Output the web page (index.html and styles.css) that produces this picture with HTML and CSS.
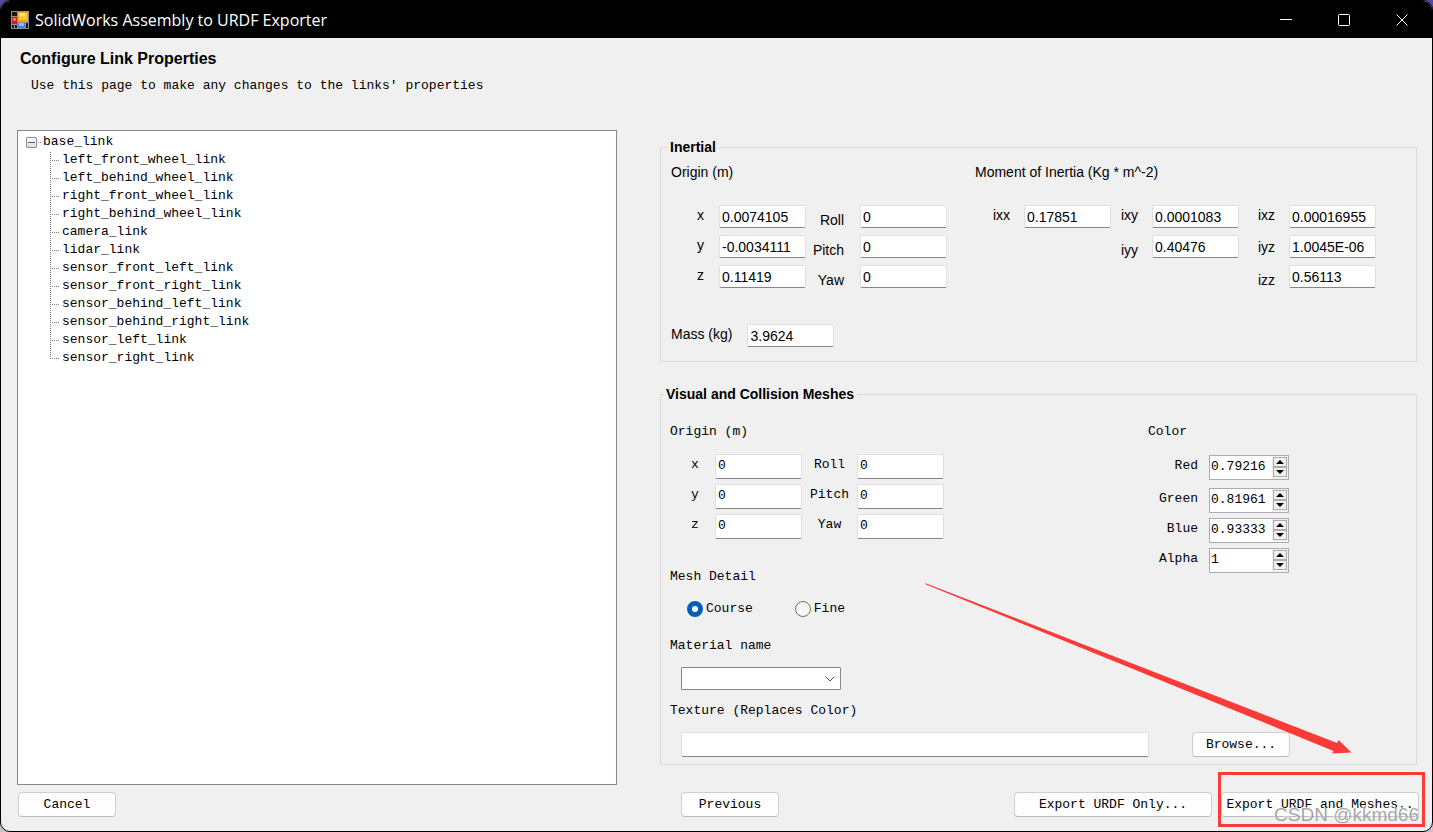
FILE: index.html
```
<!DOCTYPE html>
<html lang="en">
<head>
<meta charset="utf-8">
<title>SolidWorks Assembly to URDF Exporter</title>
<link rel="stylesheet" href="styles.css">
</head>
<body>
<div class="window">
  <header class="titlebar">
    <svg class="app-icon" viewBox="0 0 18 18" aria-hidden="true">
      <rect width="18" height="18" fill="#8f8f8f"/>
      <path d="M1 1h5v4H1zM1 14h2v3H1zM4 14h2v3H4zM15 12h2v5h-2z" fill="#1c1410"/>
      <rect x="1" y="6" width="5" height="7" fill="#b8241c"/>
      <rect x="2" y="7" width="3" height="3" fill="#ea6f62"/>
      <rect x="7" y="1" width="10" height="10" fill="#e9a91c"/>
      <rect x="8" y="2" width="8" height="7" fill="#f8c93c"/>
      <rect x="8" y="2" width="6" height="3" fill="#fde28a"/>
      <rect x="7" y="12" width="7" height="5" fill="#3c7fe0"/>
      <rect x="8" y="12" width="5" height="3" fill="#8dbcf8"/>
    </svg>
    <span class="window-title">SolidWorks Assembly to URDF Exporter</span>
    <div class="window-controls">
      <button type="button" aria-label="Minimize"><svg viewBox="0 0 12 12"><path d="M0 5.5h12"/></svg></button>
      <button type="button" aria-label="Maximize"><svg viewBox="0 0 12 12"><rect x=".5" y=".5" width="11" height="11" rx="1"/></svg></button>
      <button type="button" aria-label="Close"><svg viewBox="0 0 12 12"><path d="M.5.5l11 11M11.5.5l-11 11"/></svg></button>
    </div>
  </header>

  <main class="page">
    <h1>Configure Link Properties</h1>
    <p class="hint">Use this page to make any changes to the links' properties</p>

    <div class="columns">
      <div class="tree">
        <div class="tree-root"><button type="button" class="expander" aria-label="Collapse base_link"></button><span class="stub"></span>base_link</div>
        <ul class="tree-children">
          <li>left_front_wheel_link</li>
          <li>left_behind_wheel_link</li>
          <li>right_front_wheel_link</li>
          <li>right_behind_wheel_link</li>
          <li>camera_link</li>
          <li>lidar_link</li>
          <li>sensor_front_left_link</li>
          <li>sensor_front_right_link</li>
          <li>sensor_behind_left_link</li>
          <li>sensor_behind_right_link</li>
          <li>sensor_left_link</li>
          <li>sensor_right_link</li>
        </ul>
      </div>

      <div class="groups">
        <fieldset class="group inertial">
          <legend>Inertial</legend>
          <div class="inertial-halves">
            <section>
              <h2>Origin (m)</h2>
              <div class="pose">
                <label class="raised" for="ix">x</label><input id="ix" type="text" value="0.0074105">
                <label class="lowered" for="iroll">Roll</label><input id="iroll" type="text" value="0">
                <label class="raised" for="iy">y</label><input id="iy" type="text" value="-0.0034111">
                <label class="lowered" for="ipitch">Pitch</label><input id="ipitch" type="text" value="0">
                <label class="raised" for="iz">z</label><input id="iz" type="text" value="0.11419">
                <label class="lowered" for="iyaw">Yaw</label><input id="iyaw" type="text" value="0">
              </div>
            </section>
            <section>
              <h2>Moment of Inertia (Kg * m^-2)</h2>
              <div class="tensor">
                <label class="raised" for="ixx">ixx</label><input id="ixx" type="text" value="0.17851">
                <label class="raised" for="ixy">ixy</label><input id="ixy" type="text" value="0.0001083">
                <label class="raised" for="ixz">ixz</label><input id="ixz" type="text" value="0.00016955">
                <label class="lowered col-y" for="iyy">iyy</label><input id="iyy" type="text" value="0.40476">
                <label for="iyz">iyz</label><input id="iyz" type="text" value="1.0045E-06">
                <label class="lowered col-z" for="izz">izz</label><input id="izz" type="text" value="0.56113">
              </div>
            </section>
          </div>
          <div class="mass"><label class="raised" for="mass">Mass (kg)</label><input id="mass" type="text" value="3.9624"></div>
        </fieldset>

        <fieldset class="group visual">
          <legend>Visual and Collision Meshes</legend>
          <div class="visual-halves">
            <section>
              <h2>Origin (m)</h2>
              <div class="pose">
                <label class="raised" for="vx">x</label><input id="vx" type="text" value="0">
                <label class="raised" for="vroll">Roll</label><input id="vroll" type="text" value="0">
                <label class="raised" for="vy">y</label><input id="vy" type="text" value="0">
                <label class="raised" for="vpitch">Pitch</label><input id="vpitch" type="text" value="0">
                <label class="raised" for="vz">z</label><input id="vz" type="text" value="0">
                <label class="raised" for="vyaw">Yaw</label><input id="vyaw" type="text" value="0">
              </div>
              <h2>Mesh Detail</h2>
              <div class="radios">
                <label><input type="radio" name="detail" checked>Course</label>
                <label><input type="radio" name="detail">Fine</label>
              </div>
            </section>
            <section>
              <h2>Color</h2>
              <div class="color">
                <label for="red">Red</label>
                <div class="spin"><input id="red" type="text" value="0.79216"><span class="arrows"><button type="button" aria-label="Increase red"><svg viewBox="0 0 8 4"><path d="M0 4h8L4 0z"/></svg></button><button type="button" aria-label="Decrease red"><svg viewBox="0 0 8 4"><path d="M0 0h8L4 4z"/></svg></button></span></div>
                <label for="green">Green</label>
                <div class="spin"><input id="green" type="text" value="0.81961"><span class="arrows"><button type="button" aria-label="Increase green"><svg viewBox="0 0 8 4"><path d="M0 4h8L4 0z"/></svg></button><button type="button" aria-label="Decrease green"><svg viewBox="0 0 8 4"><path d="M0 0h8L4 4z"/></svg></button></span></div>
                <label for="blue">Blue</label>
                <div class="spin"><input id="blue" type="text" value="0.93333"><span class="arrows"><button type="button" aria-label="Increase blue"><svg viewBox="0 0 8 4"><path d="M0 4h8L4 0z"/></svg></button><button type="button" aria-label="Decrease blue"><svg viewBox="0 0 8 4"><path d="M0 0h8L4 4z"/></svg></button></span></div>
                <label for="alpha">Alpha</label>
                <div class="spin"><input id="alpha" type="text" value="1"><span class="arrows"><button type="button" aria-label="Increase alpha"><svg viewBox="0 0 8 4"><path d="M0 4h8L4 0z"/></svg></button><button type="button" aria-label="Decrease alpha"><svg viewBox="0 0 8 4"><path d="M0 0h8L4 4z"/></svg></button></span></div>
              </div>
            </section>
          </div>
          <label class="block-label" for="material">Material name</label>
          <div class="material">
            <select id="material"><option></option></select>
            <svg class="chevron" viewBox="0 0 10 6" aria-hidden="true"><path d="M.5.5L5 5 9.5.5"/></svg>
          </div>
          <label class="block-label" for="texture">Texture (Replaces Color)</label>
          <div class="texture">
            <input id="texture" type="text">
            <button type="button" class="btn">Browse...</button>
          </div>
        </fieldset>
      </div>
    </div>

    <footer class="actions">
      <div class="actions-left"><button type="button" class="btn">Cancel</button></div>
      <div class="actions-right">
        <button type="button" class="btn">Previous</button>
        <button type="button" class="btn wide push">Export URDF Only...</button>
        <div class="marked"><button type="button" class="btn wide">Export URDF and Meshes..</button></div>
      </div>
    </footer>
  </main>

  <svg class="arrow" viewBox="0 0 427 171" aria-hidden="true"><path d="M0 0L1 1.500 408.500 168 407 170.500 426.500 169.500 413.500 157 412 160z"/></svg>
  <span class="watermark">CSDN @kkmd66</span>
</div>
</body>
</html>
```

FILE: styles.css
```
* { box-sizing: border-box; }

body {
  margin: 0;
  background: linear-gradient(#5747a0 50%, #c4c4c4 50%);
  color: #000;
  font: 13px/16px "Liberation Mono", "Courier New", monospace;
}

.window {
  position: relative;
  display: flex;
  flex-direction: column;
  min-height: 100vh;
  border: 1px solid #000;
  border-radius: 10px;
  overflow: hidden;
  background: #f0f0f0;
}

input, button, select { font: inherit; color: inherit; margin: 0; }

/* Title bar */
.titlebar {
  display: flex;
  align-items: center;
  height: 37px;
  padding: 0 1px 0 10px;
  background: #000;
  color: #fff;
  font: 16px/22px "Open Sans", "Noto Sans", sans-serif;
}
.app-icon { width: 18px; height: 18px; margin-right: 6px; }
.window-controls { display: flex; margin-left: auto; align-self: stretch; }
.window-controls button {
  display: grid;
  place-items: center;
  width: 58px;
  padding: 0;
  border: 0;
  background: none;
}
.window-controls svg { width: 12px; height: 12px; fill: none; stroke: #fff; }

/* Page */
.page {
  flex: 1;
  display: flex;
  flex-direction: column;
  padding: 10px 15px 14px 16px;
}
h1 {
  margin: 0;
  padding-left: 3px;
  font: bold 16px/22px "Liberation Sans", Arial, sans-serif;
}
.hint { margin: 8px 0 36px; padding-left: 14px; }
h2 { margin: 0; font: inherit; }

.columns, .actions {
  display: grid;
  grid-template-columns: 600fr 757fr;
  column-gap: 43px;
}
.columns { flex: 1; }

/* Link tree */
.tree {
  padding: 2px 8px;
  border: 1px solid #828790;
  background: #fff;
  line-height: 18px;
}
.tree-root { display: flex; align-items: center; }
.expander {
  width: 11px;
  height: 11px;
  padding: 0;
  border: 1px solid #919191;
  border-radius: 1px;
  background: linear-gradient(#3f5fb0, #3f5fb0) center / 7px 1px no-repeat, linear-gradient(#fff, #dcdcdc);
}
.stub {
  width: 4px;
  height: 1px;
  margin-right: 2px;
  background: repeating-linear-gradient(90deg, transparent 0 1px, #808080 1px 2px);
}
.tree-children {
  margin: 0 0 0 24px;
  padding: 0;
  list-style: none;
}
.tree-children li {
  padding-left: 12px;
  background:
    repeating-linear-gradient(transparent 0 1px, #808080 1px 2px) 0 0 / 1px 100% no-repeat,
    repeating-linear-gradient(90deg, #808080 0 1px, transparent 1px 2px) 0 9px / 9px 1px no-repeat;
}
.tree-children li:last-child {
  background-size: 1px 9px, 9px 1px;
}

/* Groups */
.groups { padding-top: 9px; }
.group {
  min-width: 0;
  margin: 0 0 24px;
  border: 1px solid #dcdcdc;
}
.group legend {
  padding: 0 3px 0 2px;
  font: bold 14px/16px "Liberation Sans", Arial, sans-serif;
}
.inertial {
  padding: 9px 10px 14px;
  font-family: "Liberation Sans", Arial, sans-serif;
  font-size: 14px;
}
.inertial legend { margin-left: -3px; }
.visual { margin-bottom: 19px; padding: 22px 9px 7px; }
.visual legend { margin-left: -6px; }

.group input[type="text"] {
  min-width: 0;
  width: 100%;
  height: 23px;
  padding: 1px 2px 0;
  border: 1px solid #e0e0e0;
  border-bottom-color: #868686;
  border-radius: 2px;
  background: #fff;
}
.visual input[type="text"] { height: 25px; padding-bottom: 3px; }
.raised { padding-bottom: 4px; }
.lowered { padding-top: 6px; }

.inertial-halves { display: grid; grid-template-columns: 304fr 431fr; }
.pose, .tensor { display: grid; align-items: center; }
.pose { grid-template-columns: 48px 87px 54px 87px; row-gap: 7px; margin-top: 25px; }
.pose label:nth-of-type(odd) { padding-left: 26px; }
.inertial .pose label:nth-of-type(even) { text-align: right; padding-right: 16px; }
.tensor { grid-template-columns: 49px 87px 41px 87px 50px 87px; row-gap: 7px; margin-top: 25px; }
.tensor label { text-align: right; padding-right: 14px; }
.col-y { grid-column: 3; }
.col-z { grid-column: 5; }
.mass { display: flex; align-items: center; gap: 15px; margin-top: 36px; }
.group .mass input { width: 87px; }

.visual-halves { display: grid; grid-template-columns: 478fr 259fr; }
.visual .pose { grid-template-columns: 45px 87px 55px 87px; row-gap: 5px; margin: 14px 0 30px; }
.visual .pose label:nth-of-type(odd) { padding-left: 21px; }
.visual .pose label:nth-of-type(even) { text-align: center; }

.radios { display: flex; gap: 42px; margin-top: 16px; padding-left: 17px; }
.radios label { display: flex; align-items: center; gap: 3px; }
.radios input {
  appearance: none;
  width: 16px;
  height: 16px;
  border: 1px solid #707070;
  border-radius: 50%;
  background: #f6f6f6;
}
.radios input:checked { border: 5px solid #005fb8; background: #fff; }

/* Colour spinners */
.color {
  display: grid;
  grid-template-columns: 50px 80px;
  grid-template-rows: 28px;
  grid-auto-rows: 25px;
  gap: 5px 11px;
  margin-top: 15px;
}
.color label { padding-top: 3px; text-align: right; }
.spin {
  display: flex;
  height: 25px;
  border: 1px solid #abadb3;
  background: #fff;
}
.visual .spin input[type="text"] {
  flex: 1;
  height: 23px;
  padding: 0 0 3px 1px;
  border: 0;
  background: none;
}
.arrows { display: flex; flex-direction: column; padding: 1px; background: #f0f0f0; }
.arrows button {
  display: grid;
  place-items: center;
  width: 14px;
  height: 10px;
  padding: 0;
  border: 1px solid #acacac;
  background: #f0f0f0;
}
.arrows svg { width: 8px; height: 4px; fill: #000; }

/* Material and texture */
.block-label { display: block; }
.visual-halves + .block-label { margin-top: 21px; }
.material {
  position: relative;
  width: 160px;
  margin: 13px 0 13px 11px;
}
.material select {
  display: block;
  appearance: none;
  width: 100%;
  height: 23px;
  border: 1px solid #868686;
  border-radius: 1px;
  background: #fff;
}
.chevron {
  position: absolute;
  right: 6px;
  top: 9px;
  width: 10px;
  height: 6px;
  fill: none;
  stroke: #505050;
  pointer-events: none;
}
.texture {
  display: grid;
  grid-template-columns: 468fr 98px 74fr;
  column-gap: 43px;
  margin: 13px 0 0 11px;
}

/* Buttons */
.btn {
  width: 98px;
  height: 25px;
  padding: 0;
  border: 1px solid #d0d0d0;
  border-bottom-color: #bcbcbc;
  border-radius: 4px;
  background: #fdfdfd;
  white-space: nowrap;
}
.wide { width: 198px; }
.actions { margin-top: 7px; }
.actions-left { padding-left: 1px; }
.actions-right { display: flex; gap: 9px; padding-left: 21px; margin-right: -2px; }
.push { margin-left: auto; }
.marked { position: relative; }
.marked::after {
  content: "";
  position: absolute;
  inset: -20px -6px -10px -3px;
  border: 3px solid #fc3a38;
  pointer-events: none;
}

/* Annotations */
.arrow {
  position: absolute;
  right: 80px;
  bottom: 77px;
  width: 427px;
  height: 171px;
  fill: #fc3a38;
  pointer-events: none;
}
.watermark {
  position: absolute;
  right: 13px;
  bottom: 4px;
  color: rgba(150, 150, 150, .85);
  font: 19px/24px "Liberation Sans", Arial, sans-serif;
  text-shadow: -1px -1px 0 rgba(255, 255, 255, .7);
  pointer-events: none;
}
```
